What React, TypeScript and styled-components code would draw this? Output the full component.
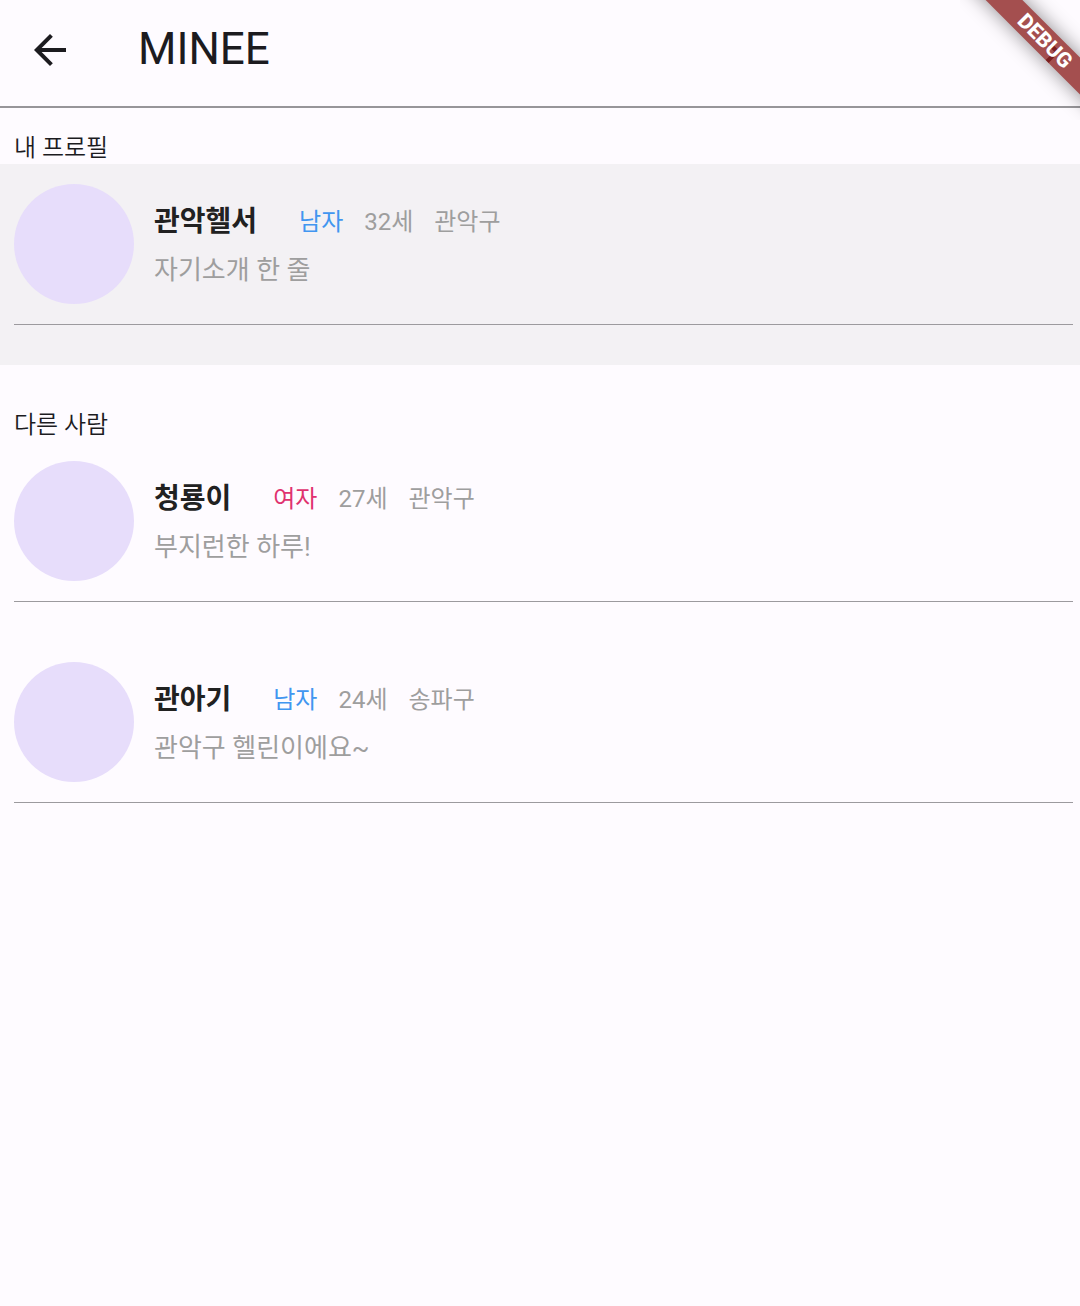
import React from 'react';
import styled, { createGlobalStyle } from 'styled-components';

const GlobalStyle = createGlobalStyle`
  *, *::before, *::after { box-sizing: border-box; }
  body {
    margin: 0;
    background: #fefbff;
    color: #1c1b1f;
    font-family: Roboto, "Noto Sans CJK KR", sans-serif;
  }
`;

const Screen = styled.div`
  position: relative;
  min-height: 100vh;
  overflow: hidden;
`;

const AppBar = styled.header`
  display: flex;
  align-items: center;
  gap: 58px;
  height: 108px;
  padding: 0 20px 6px;
  border-bottom: 2px solid #979599;
`;

const BackButton = styled.button`
  display: flex;
  align-items: center;
  justify-content: center;
  width: 60px;
  height: 60px;
  padding: 0;
  border: 0;
  border-radius: 50%;
  background: none;
  color: inherit;
  cursor: pointer;
`;

const Title = styled.h1`
  margin: 0;
  padding-bottom: 2px;
  font-size: 44px;
  font-weight: 400;
  line-height: 56px;
`;

const Section = styled.section<{ $spaced?: boolean }>`
  padding-top: ${(p) => (p.$spaced ? 44 : 24)}px;
`;

const SectionTitle = styled.h2`
  margin: 0;
  padding: 0 14px;
  font-size: 24px;
  font-weight: 350;
  line-height: 32px;
`;

const List = styled.ul`
  margin: 0;
  padding: 0;
  list-style: none;
`;

const Item = styled.li<{ $highlighted?: boolean }>`
  padding: 20px 7px 40px 14px;
  background: ${(p) => (p.$highlighted ? '#f3f1f4' : 'transparent')};
`;

const Profile = styled.div`
  display: flex;
  gap: 20px;
  padding-bottom: 20px;
  border-bottom: 1px solid #9c9a9e;
`;

const Avatar = styled.div`
  flex: none;
  width: 120px;
  height: 120px;
  border-radius: 50%;
  background: #e7ddfb;
`;

const Details = styled.div`
  display: flex;
  flex-direction: column;
  gap: 9px;
  padding-top: 18px;
`;

const Facts = styled.div`
  display: flex;
  align-items: center;
  gap: 21px;
  color: #9e9e9e;
  font-size: 24px;
  line-height: 40px;
`;

const Name = styled.strong`
  margin-right: 21px;
  color: #212121;
  font-size: 28px;
  font-weight: 700;
`;

const Gender = styled.span<{ $female: boolean }>`
  color: ${(p) => (p.$female ? '#e0326e' : '#4196f0')};
`;

const Intro = styled.p`
  margin: 0;
  color: #9e9e9e;
  font-size: 26px;
  line-height: 38px;
`;

const Corner = styled.div`
  position: absolute;
  top: 0;
  right: 0;
  width: 120px;
  height: 120px;
  overflow: hidden;
  pointer-events: none;
`;

const Ribbon = styled.div`
  position: absolute;
  top: 28px;
  right: -65px;
  width: 200px;
  height: 26px;
  background: #a44f4f;
  box-shadow: 0 0 20px rgba(0, 0, 0, 0.45);
  color: #fff;
  font-size: 21px;
  font-weight: 800;
  line-height: 26px;
  text-align: center;
  transform: rotate(45deg);
`;

const RibbonLabel = styled.span`
  position: relative;
`;

const RibbonChevron = styled.svg`
  position: absolute;
  top: 0;
  left: 104px;
`;

interface Person {
  name: string;
  gender: '남자' | '여자';
  age: number;
  district: string;
  intro: string;
}

const me: Person = { name: '관악헬서', gender: '남자', age: 32, district: '관악구', intro: '자기소개 한 줄' };

const others: Person[] = [
  { name: '청룡이', gender: '여자', age: 27, district: '관악구', intro: '부지런한 하루!' },
  { name: '관아기', gender: '남자', age: 24, district: '송파구', intro: '관악구 헬린이에요~' },
];

function ProfileItem({ person, highlighted }: { person: Person; highlighted?: boolean }) {
  return (
    <Item $highlighted={highlighted}>
      <Profile>
        <Avatar />
        <Details>
          <Facts>
            <Name>{person.name}</Name>
            <Gender $female={person.gender === '여자'}>{person.gender}</Gender>
            <span>{`${person.age}세`}</span>
            <span>{person.district}</span>
          </Facts>
          <Intro>{person.intro}</Intro>
        </Details>
      </Profile>
    </Item>
  );
}

export default function App() {
  return (
    <Screen lang="ko">
      <GlobalStyle />
      <AppBar>
        <BackButton type="button" aria-label="뒤로">
          <svg width="48" height="48" viewBox="0 0 24 24" fill="currentColor" aria-hidden="true">
            <path d="M20 11H7.83l5.59-5.59L12 4l-8 8 8 8 1.41-1.41L7.83 13H20v-2z" />
          </svg>
        </BackButton>
        <Title>MINEE</Title>
      </AppBar>
      <main>
        <Section>
          <SectionTitle>내 프로필</SectionTitle>
          <List>
            <ProfileItem person={me} highlighted />
          </List>
        </Section>
        <Section $spaced>
          <SectionTitle>다른 사람</SectionTitle>
          <List>
            {others.map((person) => (
              <ProfileItem key={person.name} person={person} />
            ))}
          </List>
        </Section>
      </main>
      <Corner>
        <Ribbon>
          <RibbonChevron width="20" height="26" viewBox="0 0 20 26" fill="none" stroke="#7a2020" strokeWidth="4" aria-hidden="true">
            <path d="M2 12H12V26" />
          </RibbonChevron>
          <RibbonLabel>DEBUG</RibbonLabel>
        </Ribbon>
      </Corner>
    </Screen>
  );
}
